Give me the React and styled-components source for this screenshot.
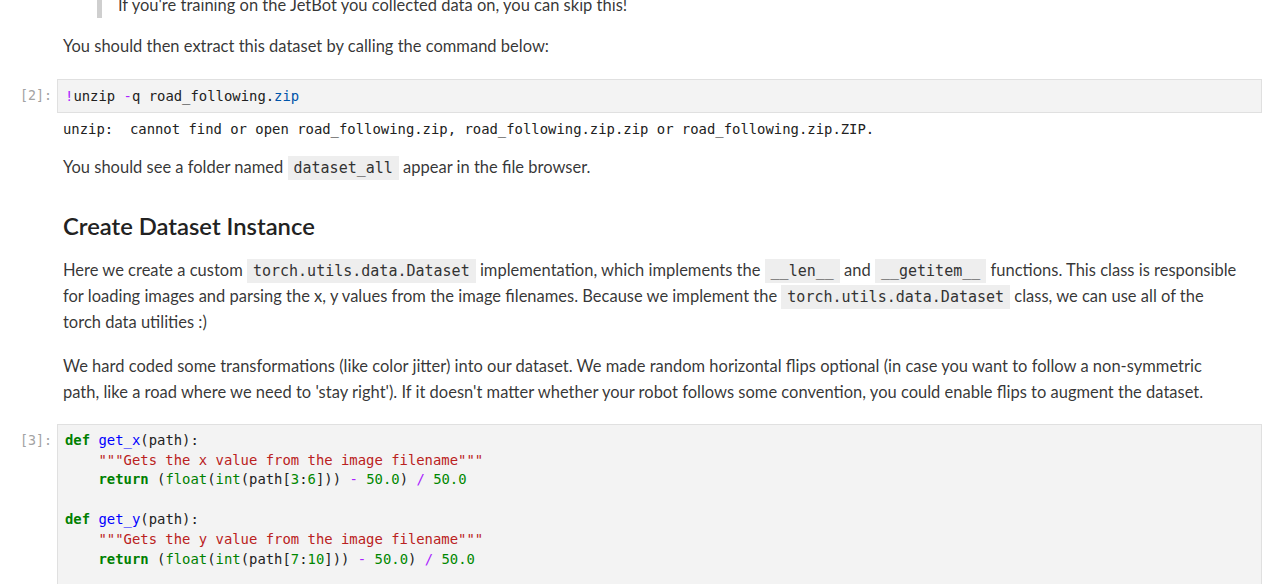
import React from "react";
import styled, { createGlobalStyle } from "styled-components";

const GlobalStyle = createGlobalStyle`
  html, body {
    margin: 0;
    padding: 0;
    background: #ffffff;
    overflow: hidden;
  }
`;

const Notebook = styled.div`
  margin-top: -8px;
  padding-right: 18px;
  display: flex;
  flex-direction: column;
  font-family: Lato, "Open Sans", sans-serif;
  color: rgba(0, 0, 0, 0.8);
`;

const Cell = styled.div`
  display: grid;
  grid-template-columns: 57px 1fr;
  margin-top: ${(p) => p.$gap || 0}px;
`;

const Prompt = styled.div`
  font-family: "DejaVu Sans Mono", monospace;
  font-size: 13.3px;
  line-height: 19.8px;
  padding-top: 7px;
  padding-right: 5px;
  text-align: right;
  color: #a3a3a3;
`;

const Markdown = styled.div`
  padding-left: 6px;
  font-size: 16.5px;
  line-height: 26px;
`;

const Para = styled.p`
  margin: ${(p) => p.$top || 0}px 0 0 0;
  white-space: nowrap;
`;

const Quote = styled.blockquote`
  margin: 0 0 0 34px;
  padding-left: 16px;
  border-left: 5px solid #cfcfcf;
`;

const Heading = styled.h2`
  margin: 0;
  font-size: 23.8px;
  font-weight: 600;
  line-height: 30px;
  color: #222;
`;

const Inline = styled.code`
  font-family: "DejaVu Sans Mono", monospace;
  font-size: 15px;
  line-height: 1;
  background: #eeeeee;
  padding: 3px 6px;
  color: #333;
`;

const Editor = styled.pre`
  margin: 0;
  background: #f3f3f3;
  border: 1px solid #e0e0e0;
  padding: ${(p) => p.$pad || "6px 7px"};
  font-family: "DejaVu Sans Mono", monospace;
  font-size: 13.9px;
  line-height: 19.8px;
  color: #212121;
  min-height: ${(p) => p.$minHeight || 0}px;
`;

const Output = styled.pre`
  margin: 0;
  padding-left: 6px;
  font-family: "DejaVu Sans Mono", monospace;
  font-size: 13.9px;
  line-height: 19px;
  color: #212121;
`;

const Kw = styled.span`
  color: #008000;
  font-weight: bold;
`;
const Def = styled.span`
  color: #0000ff;
`;
const Str = styled.span`
  color: #ba2121;
`;
const Num = styled.span`
  color: #008800;
`;
const Op = styled.span`
  color: #aa22ff;
`;
const Builtin = styled.span`
  color: #008000;
`;
const Prop = styled.span`
  color: #0055aa;
`;

export default function App() {
  return (
    <>
      <GlobalStyle />
      <Notebook>
        <Cell>
          <div />
          <Markdown>
            <Quote>If you're training on the JetBot you collected data on, you can skip this!</Quote>
            <Para $top={15}>You should then extract this dataset by calling the command below:</Para>
          </Markdown>
        </Cell>

        <Cell $gap={20}>
          <Prompt>[2]:</Prompt>
          <Editor $pad="7px 7px 5px">
            <Op>!</Op>unzip <Op>-</Op>q road_following.<Prop>zip</Prop>
          </Editor>
        </Cell>

        <Cell $gap={7}>
          <div />
          <Output>
            unzip:  cannot find or open road_following.zip, road_following.zip.zip or road_following.zip.ZIP.
          </Output>
        </Cell>

        <Cell $gap={15}>
          <div />
          <Markdown>
            <Para>
              You should see a folder named <Inline>dataset_all</Inline> appear in the file browser.
            </Para>
          </Markdown>
        </Cell>

        <Cell $gap={31}>
          <div />
          <Markdown>
            <Heading>Create Dataset Instance</Heading>
            <Para $top={16}>
              Here we create a custom <Inline>torch.utils.data.Dataset</Inline> implementation, which implements the{" "}
              <Inline>__len__</Inline> and <Inline>__getitem__</Inline> functions. This class is responsible
              <br />
              for loading images and parsing the x, y values from the image filenames. Because we implement the{" "}
              <Inline>torch.utils.data.Dataset</Inline> class, we can use all of the
              <br />
              torch data utilities :)
            </Para>
            <Para $top={18}>
              We hard coded some transformations (like color jitter) into our dataset. We made random horizontal flips
              optional (in case you want to follow a non-symmetric
              <br />
              path, like a road where we need to 'stay right'). If it doesn't matter whether your robot follows some
              convention, you could enable flips to augment the dataset.
            </Para>
          </Markdown>
        </Cell>

        <Cell $gap={19}>
          <Prompt>[3]:</Prompt>
          <Editor $minHeight={180} $pad="6px 7px">
            <Kw>def</Kw> <Def>get_x</Def>(path):
            {"\n    "}
            <Str>"""Gets the x value from the image filename"""</Str>
            {"\n    "}
            <Kw>return</Kw> (<Builtin>float</Builtin>(<Builtin>int</Builtin>(path[<Num>3</Num>:<Num>6</Num>])) <Op>-</Op>{" "}
            <Num>50.0</Num>) <Op>/</Op> <Num>50.0</Num>
            {"\n\n"}
            <Kw>def</Kw> <Def>get_y</Def>(path):
            {"\n    "}
            <Str>"""Gets the y value from the image filename"""</Str>
            {"\n    "}
            <Kw>return</Kw> (<Builtin>float</Builtin>(<Builtin>int</Builtin>(path[<Num>7</Num>:<Num>10</Num>])) <Op>-</Op>{" "}
            <Num>50.0</Num>) <Op>/</Op> <Num>50.0</Num>
          </Editor>
        </Cell>
      </Notebook>
    </>
  );
}
